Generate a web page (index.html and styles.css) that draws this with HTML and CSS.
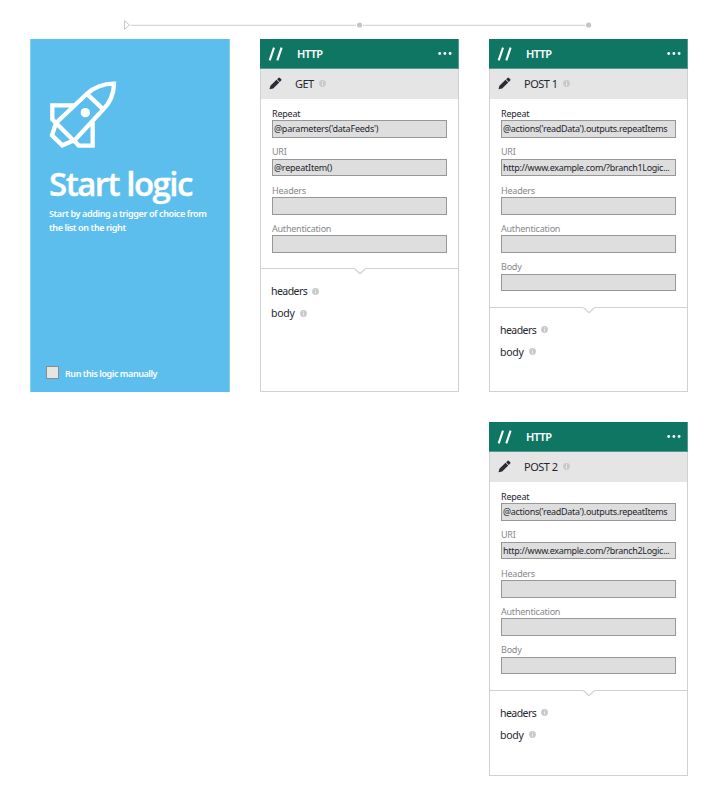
FILE: index.html
```html
<!DOCTYPE html>
<html lang="en">
<head>
<meta charset="utf-8">
<title>Logic designer</title>
<link rel="stylesheet" href="styles.css">
</head>
<body>
<svg width="0" height="0" class="defs">
  <symbol id="slashes" viewBox="0 0 16 14"><path d="M1.7 13.3 6 .7M9.3 13.3 13.6.7" fill="none" stroke="#fff" stroke-width="2.1"/></symbol>
  <symbol id="pencil" viewBox="0 0 13 13"><path d="M.5 12.3 1.4 8.7 7.5 2.8 10.3 5.5 4.2 11.6Z M8.1 2.2 9.7.8Q10.3.3 10.9.9L12.3 2.2Q12.8 2.8 12.2 3.4L10.8 4.9Z" fill="#2b2d35"/></symbol>
  <symbol id="info" viewBox="0 0 7 7"><circle cx="3.5" cy="3.5" r="3.4" fill="#c8c9ca"/><path d="M3.5 1.2v1M3.5 2.8v2.9" stroke="#eee" stroke-width=".9"/></symbol>
  <symbol id="notch" viewBox="0 0 12 7"><path d="M0 0H12V1L6 6 0 1Z" fill="#fff"/><path d="M.3.5 6 5.7 11.7.5" fill="none" stroke="#d0d1d2" stroke-width="1.3"/></symbol>
  <symbol id="dots" viewBox="0 0 14 3"><g fill="#fff"><circle cx="1.7" cy="1.5" r="1.4"/><circle cx="6.9" cy="1.5" r="1.4"/><circle cx="12.1" cy="1.5" r="1.4"/></g></symbol>
</svg>
<main class="designer">
  <svg class="timeline" viewBox="0 0 710 39">
    <path d="M124.5 20.5V29.5L129.3 25Z" fill="#fff" stroke="#c4c8ce"/>
    <path d="M130.5 25.3H356M363 25.3H585" stroke="#cbcdd1"/>
    <circle cx="359.6" cy="25" r="2.6" fill="#c2c5c9"/><circle cx="588.6" cy="25" r="2.6" fill="#c2c5c9"/>
  </svg>
  <div class="board">
    <section class="start">
      <svg class="rocket" viewBox="27 25 204 204"><g fill="none" stroke="#fff" stroke-width="13"><path d="M48 151 140 64Q174 33 222 33Q221 79 190 110L102 205ZM143 66 190 110M106 98H37V140L48 151 36 188 67 218 102 203 116 219H158V149"/></g><circle cx="136" cy="120" r="14" fill="#fff"/></svg>
      <h1>Start logic</h1>
      <p>Start by adding a trigger of choice from<br>the list on the right</p>
      <label class="manual"><span class="check"></span><span class="manual-text">Run this logic manually</span></label>
    </section>

    <section class="card get">
      <header><svg class="slashes"><use href="#slashes"/></svg><b>HTTP</b><svg class="dots"><use href="#dots"/></svg></header>
      <div class="name"><svg class="pencil"><use href="#pencil"/></svg><span>GET</span><svg class="info"><use href="#info"/></svg></div>
      <div class="fields">
        <div class="field dark"><span class="lab">Repeat</span><div class="box"><span class="short">@parameters('dataFeeds')</span></div></div>
        <div class="field"><span class="lab">URI</span><div class="box"><span class="short">@repeatItem()</span></div></div>
        <div class="field"><span class="lab">Headers</span><div class="box"></div></div>
        <div class="field"><span class="lab">Authentication</span><div class="box"></div></div>
      </div>
      <div class="outputs"><svg class="notch"><use href="#notch"/></svg>
        <div><span>headers</span><svg class="info"><use href="#info"/></svg></div>
        <div><span class="loose">body</span><svg class="info"><use href="#info"/></svg></div>
      </div>
    </section>

    <section class="card">
      <header><svg class="slashes"><use href="#slashes"/></svg><b>HTTP</b><svg class="dots"><use href="#dots"/></svg></header>
      <div class="name"><svg class="pencil"><use href="#pencil"/></svg><span>POST 1</span><svg class="info"><use href="#info"/></svg></div>
      <div class="fields">
        <div class="field dark"><span class="lab">Repeat</span><div class="box"><span class="expr">@actions('readData').outputs.repeatItems</span></div></div>
        <div class="field"><span class="lab">URI</span><div class="box"><span class="url">http://www.example.com/?branch1Logic...</span></div></div>
        <div class="field"><span class="lab">Headers</span><div class="box"></div></div>
        <div class="field"><span class="lab">Authentication</span><div class="box"></div></div>
        <div class="field"><span class="lab">Body</span><div class="box"></div></div>
      </div>
      <div class="outputs"><svg class="notch"><use href="#notch"/></svg>
        <div><span>headers</span><svg class="info"><use href="#info"/></svg></div>
        <div><span class="loose">body</span><svg class="info"><use href="#info"/></svg></div>
      </div>
    </section>

    <section class="card second">
      <header><svg class="slashes"><use href="#slashes"/></svg><b>HTTP</b><svg class="dots"><use href="#dots"/></svg></header>
      <div class="name"><svg class="pencil"><use href="#pencil"/></svg><span>POST 2</span><svg class="info"><use href="#info"/></svg></div>
      <div class="fields">
        <div class="field dark"><span class="lab">Repeat</span><div class="box"><span class="expr">@actions('readData').outputs.repeatItems</span></div></div>
        <div class="field"><span class="lab">URI</span><div class="box"><span class="url">http://www.example.com/?branch2Logic...</span></div></div>
        <div class="field"><span class="lab">Headers</span><div class="box"></div></div>
        <div class="field"><span class="lab">Authentication</span><div class="box"></div></div>
        <div class="field"><span class="lab">Body</span><div class="box"></div></div>
      </div>
      <div class="outputs"><svg class="notch"><use href="#notch"/></svg>
        <div><span>headers</span><svg class="info"><use href="#info"/></svg></div>
        <div><span class="loose">body</span><svg class="info"><use href="#info"/></svg></div>
      </div>
    </section>
  </div>
</main>
</body>
</html>
```
FILE: styles.css
```css
* { box-sizing: border-box; }
body { margin: 0; background: #fff; font-family: "Noto Sans", "Open Sans", sans-serif; color: #24262e; }
.defs { display: block; height: 0; }
svg { display: block; flex: none; }
.designer { width: 710px; height: 798px; overflow: hidden; }
.timeline { width: 710px; height: 39px; }
.board { display: grid; grid-template-columns: 200px 199px 199px; grid-template-rows: 353px 354px; column-gap: 30px; row-gap: 30px; padding-left: 30px; }
.start { background: #5cbeec; border: solid #85cff0; border-width: 0 1px; color: #fff; padding: 42px 0 0 18px; display: flex; flex-direction: column; }
.rocket { width: 68px; height: 68px; }
h1 { margin: 13px 0 0; font: 600 33px/44px "Open Sans", sans-serif; letter-spacing: -1.5px; -webkit-text-stroke: .4px #fff; white-space: nowrap; }
p { margin: 1px 0 0; font-size: 9px; line-height: 14px; font-weight: 600; letter-spacing: -.38px; white-space: nowrap; }
.manual { display: flex; align-items: center; margin: auto 0 13px -3px; height: 13px; font-size: 9px; font-weight: 600; white-space: nowrap; }
.check { width: 13px; height: 13px; background: #e5e5e5; border: 1px solid #8b8b8b; margin-right: 6px; }
.manual-text { letter-spacing: -.44px; padding-top: 1px; }
.card { border: 1px solid #d0d1d2; border-top: 0; background: #fff; display: flex; flex-direction: column; }
.second { grid-column: 3; grid-row: 2; }
header { height: 30px; margin: 0 -1px; background: #107664; border: solid #56988c; border-width: 0 1px 1px 0; color: #fff; display: flex; align-items: center; padding: 0 6px 0 8px; }
.slashes { width: 16px; height: 14px; margin-top: 1px; }
header b { font-weight: 600; font-size: 11px; margin-left: 13px; letter-spacing: -.6px; }
.dots { width: 14px; height: 3px; margin-left: auto; }
.name { height: 30px; background: #e5e5e5; display: flex; align-items: center; padding: 0 0 1px 8px; font-size: 11px; }
.name span { margin-left: 13px; letter-spacing: -.5px; }
.pencil { width: 13px; height: 13px; }
.info { width: 7px; height: 7px; margin-left: 5px; }
.fields { padding: 0 11px 15.5px; }
.field { height: 38.4px; display: flex; flex-direction: column; justify-content: flex-end; font-size: 9px; color: #85888c; }
.field:first-child { height: 38.8px; }
.lab { line-height: 10px; margin-bottom: 1.4px; letter-spacing: -.22px; white-space: nowrap; }
.dark .lab { color: #24262e; margin-bottom: 1px; }
.box { height: 17.5px; background: #dedede; border: 1px solid #979797; padding-left: 1px; font-size: 9px; line-height: 16px; color: #24262e; white-space: nowrap; overflow: hidden; width: 175px; }
.short { letter-spacing: -.22px; }
.expr { letter-spacing: -.29px; }
.url { letter-spacing: -.3px; }
.outputs { border-top: 1px solid #d0d1d2; position: relative; flex: 1; padding-top: 11px; font-size: 10.5px; }
.outputs div { display: flex; align-items: center; height: 22px; padding-left: 10px; }
.outputs span { letter-spacing: -.55px; }
.outputs .loose { letter-spacing: -.25px; }
.notch { position: absolute; width: 12px; height: 7px; top: -1px; left: 93px; }
```
